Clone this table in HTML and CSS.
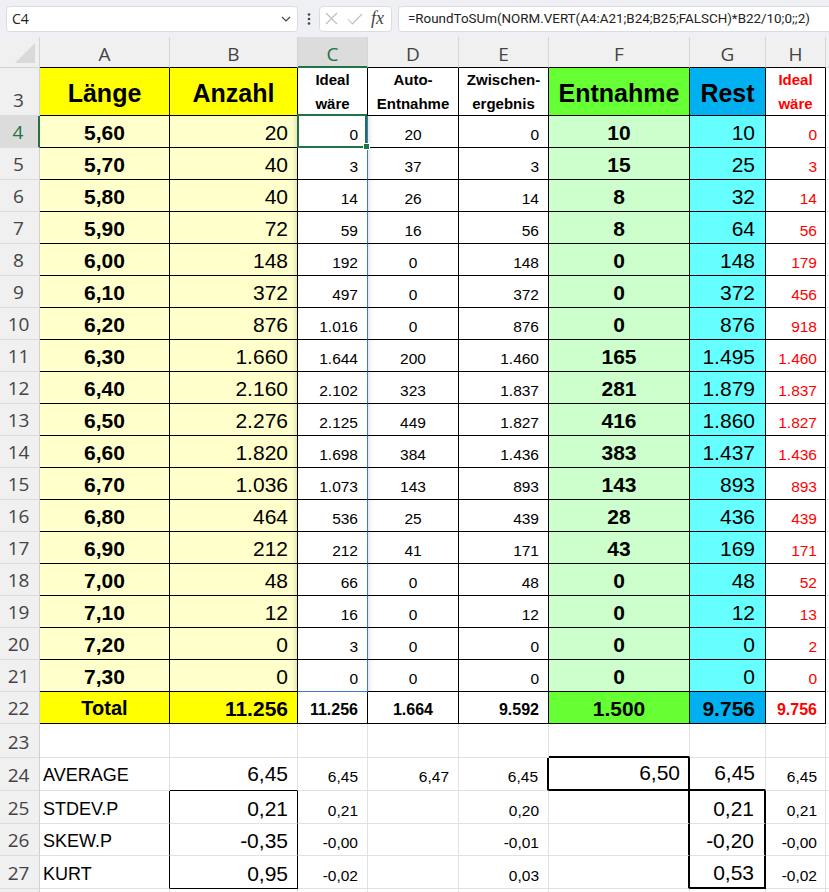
FILE: index.html
```html
<!DOCTYPE html>
<html lang="de">
<head>
<meta charset="utf-8">
<title>Excel</title>
<link rel="stylesheet" href="styles.css">
</head>
<body>
<div class="toolbar">
  <div class="namebox"><span>C4</span><svg width="10" height="6" viewBox="0 0 10 6"><polyline points="1,1 5,5 9,1" fill="none" stroke="#444" stroke-width="1.2"/></svg></div>
  <div class="dots"><svg width="4" height="12" viewBox="0 0 4 12"><circle cx="2" cy="1.5" r="1.3" fill="#444"/><circle cx="2" cy="6" r="1.3" fill="#444"/><circle cx="2" cy="10.5" r="1.3" fill="#444"/></svg></div>
  <div class="fxbox">
    <svg class="ix" width="13" height="13" viewBox="0 0 13 13"><path d="M1 1 L12 12 M12 1 L1 12" stroke="#bdbdbd" stroke-width="1.1" fill="none"/></svg>
    <svg class="ic" width="16" height="12" viewBox="0 0 16 12"><polyline points="1,6 5.5,11 15,1" stroke="#bdbdbd" stroke-width="1.1" fill="none"/></svg>
    <span class="fx">fx</span>
  </div>
  <div class="formula">=RoundToSUm(NORM.VERT(A4:A21;B24;B25;FALSCH)*B22/10;0;;2)</div>
</div>

<div class="sheet">
  <div class="row hdr">
    <div class="corner"><span class="tri"></span></div>
    <div class="ch">A</div><div class="ch">B</div><div class="ch chsel">C</div><div class="ch">D</div><div class="ch">E</div><div class="ch">F</div><div class="ch">G</div><div class="ch">H</div><div class="ch chrest"></div>
  </div>

  <div class="row r3">
    <div class="rh">3</div>
    <div class="c k y hd">Länge</div>
    <div class="c k y hd">Anzahl</div>
    <div class="c k two"><span>Ideal<br>wäre</span></div>
    <div class="c k two"><span>Auto-<br>Entnahme</span></div>
    <div class="c k two"><span>Zwischen-<br>ergebnis</span></div>
    <div class="c k gf hd">Entnahme</div>
    <div class="c k bl hd">Rest</div>
    <div class="c k two red"><span>Ideal<br>wäre</span></div>
    <div class="c"></div>
  </div>

  <div class="row"><div class="rh rhsel">4</div><div class="c k py m b21">5,60</div><div class="c k py n21 shl">20</div><div class="c k sp ov">0<span class="sel"></span><span class="handle"></span></div><div class="c k m shr">20</div><div class="c k">0</div><div class="c k pg m b21">10</div><div class="c k pb n21 g">10</div><div class="c k red hp">0</div><div class="c"></div></div>
  <div class="row"><div class="rh">5</div><div class="c k py m b21">5,70</div><div class="c k py n21 shl">40</div><div class="c k sp">3</div><div class="c k m shr">37</div><div class="c k">3</div><div class="c k pg m b21">15</div><div class="c k pb n21 g">25</div><div class="c k red hp">3</div><div class="c"></div></div>
  <div class="row"><div class="rh">6</div><div class="c k py m b21">5,80</div><div class="c k py n21 shl">40</div><div class="c k sp">14</div><div class="c k m shr">26</div><div class="c k">14</div><div class="c k pg m b21">8</div><div class="c k pb n21 g">32</div><div class="c k red hp">14</div><div class="c"></div></div>
  <div class="row"><div class="rh">7</div><div class="c k py m b21">5,90</div><div class="c k py n21 shl">72</div><div class="c k sp">59</div><div class="c k m shr">16</div><div class="c k">56</div><div class="c k pg m b21">8</div><div class="c k pb n21 g">64</div><div class="c k red hp">56</div><div class="c"></div></div>
  <div class="row"><div class="rh">8</div><div class="c k py m b21">6,00</div><div class="c k py n21 shl">148</div><div class="c k sp">192</div><div class="c k m shr">0</div><div class="c k">148</div><div class="c k pg m b21">0</div><div class="c k pb n21 g">148</div><div class="c k red hp">179</div><div class="c"></div></div>
  <div class="row"><div class="rh">9</div><div class="c k py m b21">6,10</div><div class="c k py n21 shl">372</div><div class="c k sp">497</div><div class="c k m shr">0</div><div class="c k">372</div><div class="c k pg m b21">0</div><div class="c k pb n21 g">372</div><div class="c k red hp">456</div><div class="c"></div></div>
  <div class="row"><div class="rh">10</div><div class="c k py m b21">6,20</div><div class="c k py n21 shl">876</div><div class="c k sp">1.016</div><div class="c k m shr">0</div><div class="c k">876</div><div class="c k pg m b21">0</div><div class="c k pb n21 g">876</div><div class="c k red hp">918</div><div class="c"></div></div>
  <div class="row"><div class="rh">11</div><div class="c k py m b21">6,30</div><div class="c k py n21 shl">1.660</div><div class="c k sp">1.644</div><div class="c k m shr">200</div><div class="c k">1.460</div><div class="c k pg m b21">165</div><div class="c k pb n21 g">1.495</div><div class="c k red hp">1.460</div><div class="c"></div></div>
  <div class="row"><div class="rh">12</div><div class="c k py m b21">6,40</div><div class="c k py n21 shl">2.160</div><div class="c k sp">2.102</div><div class="c k m shr">323</div><div class="c k">1.837</div><div class="c k pg m b21">281</div><div class="c k pb n21 g">1.879</div><div class="c k red hp">1.837</div><div class="c"></div></div>
  <div class="row"><div class="rh">13</div><div class="c k py m b21">6,50</div><div class="c k py n21 shl">2.276</div><div class="c k sp">2.125</div><div class="c k m shr">449</div><div class="c k">1.827</div><div class="c k pg m b21">416</div><div class="c k pb n21 g">1.860</div><div class="c k red hp">1.827</div><div class="c"></div></div>
  <div class="row"><div class="rh">14</div><div class="c k py m b21">6,60</div><div class="c k py n21 shl">1.820</div><div class="c k sp">1.698</div><div class="c k m shr">384</div><div class="c k">1.436</div><div class="c k pg m b21">383</div><div class="c k pb n21 g">1.437</div><div class="c k red hp">1.436</div><div class="c"></div></div>
  <div class="row"><div class="rh">15</div><div class="c k py m b21">6,70</div><div class="c k py n21 shl">1.036</div><div class="c k sp">1.073</div><div class="c k m shr">143</div><div class="c k">893</div><div class="c k pg m b21">143</div><div class="c k pb n21 g">893</div><div class="c k red hp">893</div><div class="c"></div></div>
  <div class="row"><div class="rh">16</div><div class="c k py m b21">6,80</div><div class="c k py n21 shl">464</div><div class="c k sp">536</div><div class="c k m shr">25</div><div class="c k">439</div><div class="c k pg m b21">28</div><div class="c k pb n21 g">436</div><div class="c k red hp">439</div><div class="c"></div></div>
  <div class="row"><div class="rh">17</div><div class="c k py m b21">6,90</div><div class="c k py n21 shl">212</div><div class="c k sp">212</div><div class="c k m shr">41</div><div class="c k">171</div><div class="c k pg m b21">43</div><div class="c k pb n21 g">169</div><div class="c k red hp">171</div><div class="c"></div></div>
  <div class="row"><div class="rh">18</div><div class="c k py m b21">7,00</div><div class="c k py n21 shl">48</div><div class="c k sp">66</div><div class="c k m shr">0</div><div class="c k">48</div><div class="c k pg m b21">0</div><div class="c k pb n21 g">48</div><div class="c k red hp">52</div><div class="c"></div></div>
  <div class="row"><div class="rh">19</div><div class="c k py m b21">7,10</div><div class="c k py n21 shl">12</div><div class="c k sp">16</div><div class="c k m shr">0</div><div class="c k">12</div><div class="c k pg m b21">0</div><div class="c k pb n21 g">12</div><div class="c k red hp">13</div><div class="c"></div></div>
  <div class="row"><div class="rh">20</div><div class="c k py m b21">7,20</div><div class="c k py n21 shl">0</div><div class="c k sp">3</div><div class="c k m shr">0</div><div class="c k">0</div><div class="c k pg m b21">0</div><div class="c k pb n21 g">0</div><div class="c k red hp">2</div><div class="c"></div></div>
  <div class="row"><div class="rh">21</div><div class="c k py m b21">7,30</div><div class="c k py n21 shl">0</div><div class="c k sp spb">0</div><div class="c k m shr">0</div><div class="c k">0</div><div class="c k pg m b21">0</div><div class="c k pb n21 g">0</div><div class="c k red hp">0</div><div class="c"></div></div>

  <div class="row"><div class="rh">22</div><div class="c k y m b20">Total</div><div class="c k y b21">11.256</div><div class="c k sb">11.256</div><div class="c k m sb">1.664</div><div class="c k sb">9.592</div><div class="c k gf m b21">1.500</div><div class="c k bl b21 g">9.756</div><div class="c k red sb hp">9.756</div><div class="c"></div></div>

  <div class="row h34"><div class="rh">23</div><div class="c"></div><div class="c"></div><div class="c"></div><div class="c"></div><div class="c"></div><div class="c tb2"></div><div class="c"></div><div class="c"></div><div class="c"></div></div>

  <div class="row h33 p6"><div class="rh">24</div><div class="c l lab">AVERAGE</div><div class="c n21 bk-b">6,45</div><div class="c">6,45</div><div class="c">6,47</div><div class="c rb2">6,45</div><div class="c n21 rb2 bb2 f">6,50</div><div class="c n21 g bb2">6,45</div><div class="c hp">6,45</div><div class="c"></div></div>
  <div class="row h33"><div class="rh">25</div><div class="c l lab bk-r">STDEV.P</div><div class="c n21 bk-r">0,21</div><div class="c">0,21</div><div class="c"></div><div class="c">0,20</div><div class="c rb2"></div><div class="c n21 g rb2">0,21</div><div class="c hp">0,21</div><div class="c"></div></div>
  <div class="row"><div class="rh">26</div><div class="c l lab bk-r">SKEW.P</div><div class="c n21 bk-r">-0,35</div><div class="c">-0,00</div><div class="c"></div><div class="c">-0,01</div><div class="c rb2"></div><div class="c n21 g rb2">-0,20</div><div class="c hp">-0,00</div><div class="c"></div></div>
  <div class="row h33"><div class="rh">27</div><div class="c l lab bk-r">KURT</div><div class="c n21 bk-r bk-b">0,95</div><div class="c">-0,02</div><div class="c"></div><div class="c">0,03</div><div class="c rb2"></div><div class="c n21 g rb2 bb2">0,53</div><div class="c hp">-0,02</div><div class="c"></div></div>
  <div class="row"><div class="rh"></div><div class="c"></div><div class="c"></div><div class="c"></div><div class="c"></div><div class="c"></div><div class="c"></div><div class="c"></div><div class="c"></div><div class="c"></div></div>
</div>
</body>
</html>
```

FILE: styles.css
```css
* { box-sizing: border-box; }
html, body { margin: 0; padding: 0; }
body {
  width: 829px;
  height: 892px;
  overflow: hidden;
  background: #fff;
  color: #000;
  font-family: "Liberation Sans", Arial, sans-serif;
}

/* ---------- formula bar ---------- */
.toolbar {
  height: 37px;
  background: #eef0f3;
  display: flex;
  align-items: center;
  padding-left: 6px;
  overflow: hidden;
  font-family: "Open Sans", "Noto Sans", sans-serif;
}
.namebox {
  flex: none;
  width: 292px;
  height: 26px;
  background: #fff;
  border: 1px solid #dadce0;
  border-radius: 4px;
  display: flex;
  align-items: center;
  justify-content: space-between;
  padding: 0 6px 0 5px;
  font-size: 14px;
  color: #222;
}
.dots {
  flex: none;
  width: 21px;
  display: flex;
  justify-content: center;
}
.fxbox {
  flex: none;
  width: 73px;
  height: 26px;
  background: #fff;
  border: 1px solid #dadce0;
  border-radius: 4px;
  display: flex;
  align-items: center;
  padding-left: 5px;
}
.fxbox .ic { margin-left: 9px; }
.fx {
  margin-left: 8px;
  font-family: "Liberation Serif", "DejaVu Serif", serif;
  font-style: italic;
  font-size: 18px;
  color: #444;
}
.formula {
  flex: none;
  width: 445px;
  height: 26px;
  margin-left: 6px;
  background: #fff;
  border: 1px solid #dadce0;
  border-radius: 4px;
  padding-left: 9px;
  display: flex;
  align-items: center;
  font-family: Roboto, "Open Sans", sans-serif;
  font-size: 13.4px;
  color: #222;
  white-space: nowrap;
}

/* ---------- sheet ---------- */
.sheet { display: flex; flex-direction: column; }
.row {
  display: grid;
  grid-template-columns: 40px 130px 128px 70px 91px 90px 141px 76px 60px 1fr;
  height: 32px;
}
.row.hdr { height: 31px; }
.row.r3 { height: 48px; }
.row.h34 { height: 34px; }
.row.h33 { height: 33px; }

.corner {
  background: #f0f0f0;
  border-right: 1px solid #d4d4d4;
  border-bottom: 1px solid #d4d4d4;
  position: relative;
}
.tri {
  position: absolute;
  right: 4px;
  bottom: 4px;
  width: 0;
  height: 0;
  border-left: 20px solid transparent;
  border-bottom: 20px solid #d9d9d9;
}
.ch {
  background: #f0f0f0;
  border-right: 1px solid #d6d6d6;
  border-bottom: 1px solid #000;
  display: flex;
  justify-content: center;
  align-items: flex-end;
  padding-bottom: 3px;
  font-family: "Open Sans", "Noto Sans", sans-serif;
  font-size: 19px;
  line-height: 1;
  color: #444;
}
.ch.chsel {
  background: #dcdcdc;
  color: #217346;
  border-bottom: 2px solid #217346;
  padding-bottom: 2px;
}
.ch.chrest { border-bottom-color: #d6d6d6; border-right: none; }

.rh {
  background: #f0f0f0;
  border-right: 1px solid #d0d0d0;
  border-bottom: 1px solid #dcdcdc;
  display: flex;
  justify-content: center;
  align-items: flex-end;
  padding: 0 2px 5px 0;
  font-family: "Open Sans", "Noto Sans", sans-serif;
  font-size: 19px;
  line-height: 1;
  color: #444;
}
.rh.rhsel {
  background: #dcdcdc;
  color: #217346;
  border-right: 2px solid #217346;
}

.c {
  border-right: 1px solid #e1e1e1;
  border-bottom: 1px solid #e1e1e1;
  display: flex;
  align-items: flex-end;
  justify-content: flex-end;
  padding: 0 9px 5px 3px;
  overflow: hidden;
  white-space: nowrap;
  font-size: 15.5px;
  line-height: 1;
}
.k { border-right-color: #000; border-bottom-color: #000; }
.m { justify-content: center; padding-left: 0; padding-right: 0; }
.l { justify-content: flex-start; padding-left: 3px; }
.g { padding-right: 10px; }
.hp { padding-right: 8px; }
.f { padding-right: 8px; }

.n21 { font-size: 21px; padding-bottom: 4px; }
.b21 { font-size: 21px; font-weight: bold; padding-bottom: 4px; }
.b20 { font-size: 20px; font-weight: bold; }
.sb { font-size: 16px; font-weight: bold; }
.lab { font-size: 18px; }
.p6 .c { padding-bottom: 6px; }

.hd {
  font-size: 25px;
  font-weight: bold;
  justify-content: center;
  align-items: center;
  padding: 3px 0 0 0;
}
.two {
  font-size: 15px;
  font-weight: bold;
  line-height: 24px;
  align-items: flex-start;
  justify-content: center;
  text-align: center;
  padding: 0;
  white-space: normal;
}

.y { background: #ffff00; }
.py { background: #ffffcc; }
.gf { background: #66ff33; }
.pg { background: #ccffcc; }
.bl { background: #00b0f0; }
.pb { background: #66ffff; }
.red { color: #ff0000; }

/* spill range + selection */
.sp { border-right-color: #3c78d8; }
.spb { border-bottom-color: #3c78d8; }
.shl { box-shadow: inset -6px 0 6px -6px rgba(0, 0, 0, 0.22); }
.shr { box-shadow: inset 6px 0 6px -6px rgba(0, 0, 0, 0.18); }
.ov { overflow: visible; position: relative; z-index: 2; }
.sel {
  position: absolute;
  left: -1px;
  top: -2px;
  right: 0;
  bottom: -1px;
  border: 2px solid #217346;
}
.handle {
  position: absolute;
  left: 65px;
  top: 27px;
  width: 7px;
  height: 7px;
  background: #217346;
  border: 1px solid #fff;
}

/* boxes below the table */
.bk-r { border-right-color: #000; }
.bk-b { border-bottom-color: #000; }
.rb2 { border-right: 2px solid #000; }
.bb2 { border-bottom: 2px solid #000; }
.tb2 { border-bottom: 2px solid #000; }
```
